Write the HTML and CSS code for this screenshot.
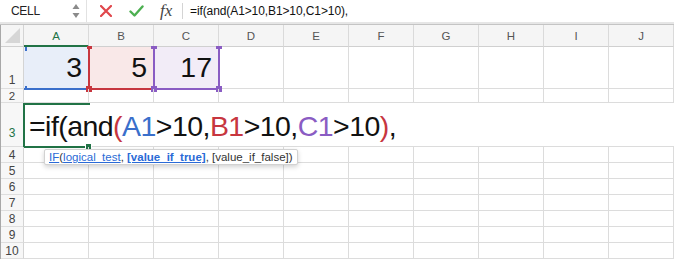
FILE: index.html
```html
<!DOCTYPE html>
<html>
<head>
<meta charset="utf-8">
<link rel="stylesheet" href="styles.css">
</head>
<body>
<div class="app">
  <div class="fbar">
    <div class="namebox">
      <span class="name">CELL</span>
      <svg class="spin" width="8" height="16" viewBox="0 0 8 16"><path d="M4 1 L7.5 6 L0.5 6 Z" fill="#8a8a8a"/><path d="M4 15 L7.5 10 L0.5 10 Z" fill="#8a8a8a"/></svg>
    </div>
    <div class="fbtns">
      <svg class="ic-x" width="12" height="12" viewBox="0 0 12 12"><path d="M1 1 L11 11 M11 1 L1 11" stroke="#e0474c" stroke-width="2.2" stroke-linecap="round"/></svg>
      <svg class="ic-ok" width="15" height="12" viewBox="0 0 15 12"><path d="M1.5 6.5 L5.5 10.5 L13.5 1.5" stroke="#4caf50" stroke-width="2.4" fill="none" stroke-linecap="round" stroke-linejoin="round"/></svg>
      <span class="fx">fx</span>
    </div>
    <div class="ftext">=if(and(A1&gt;10,B1&gt;10,C1&gt;10),</div>
  </div>
  <div class="sheet">
    <div class="row hdr">
      <div class="rh corner"><span class="tri"></span></div>
      <div class="ch active">A</div><div class="ch">B</div><div class="ch">C</div><div class="ch">D</div><div class="ch">E</div>
      <div class="ch">F</div><div class="ch">G</div><div class="ch">H</div><div class="ch">I</div><div class="ch">J</div>
    </div>
    <div class="row r1">
      <div class="rh">1</div>
      <div class="c num fa">3</div><div class="c num fb">5</div><div class="c num fc">17</div>
      <div class="c"></div><div class="c"></div><div class="c"></div><div class="c"></div><div class="c"></div><div class="c"></div><div class="c"></div>
      <div class="hl hl-a"><i class="sq tl"></i><i class="sq bl"></i></div>
      <div class="hl hl-b"><i class="sq tl"></i><i class="sq bl"></i></div>
      <div class="hl hl-c"><i class="sq tl"></i><i class="sq tr"></i><i class="sq bl"></i><i class="sq br"></i></div>
    </div>
    <div class="row r2">
      <div class="rh">2</div>
      <div class="c"></div><div class="c"></div><div class="c"></div><div class="c"></div><div class="c"></div><div class="c"></div><div class="c"></div><div class="c"></div><div class="c"></div><div class="c"></div>
    </div>
    <div class="row r3">
      <div class="rh act">3</div>
      <div class="cursorbox"><i class="handle"></i></div>
      <div class="edit"><span>=if(and</span><span class="red">(</span><span class="blue">A1</span>&gt;10,<span class="red">B1</span>&gt;10,<span class="purple">C1</span>&gt;10<span class="red">)</span>,</div>
    </div>
    <div class="row sm"><div class="rh">4</div><div class="c"></div><div class="c"></div><div class="c"></div><div class="c"></div><div class="c"></div><div class="c"></div><div class="c"></div><div class="c"></div><div class="c"></div><div class="c"></div>
      <div class="tip"><a class="lk">IF</a>(<a class="lk">logical_test</a>, <a class="lk b">[value_if_true]</a>, [value_if_false])</div>
    </div>
    <div class="row sm"><div class="rh">5</div><div class="c"></div><div class="c"></div><div class="c"></div><div class="c"></div><div class="c"></div><div class="c"></div><div class="c"></div><div class="c"></div><div class="c"></div><div class="c"></div></div>
    <div class="row sm"><div class="rh">6</div><div class="c"></div><div class="c"></div><div class="c"></div><div class="c"></div><div class="c"></div><div class="c"></div><div class="c"></div><div class="c"></div><div class="c"></div><div class="c"></div></div>
    <div class="row sm"><div class="rh">7</div><div class="c"></div><div class="c"></div><div class="c"></div><div class="c"></div><div class="c"></div><div class="c"></div><div class="c"></div><div class="c"></div><div class="c"></div><div class="c"></div></div>
    <div class="row sm"><div class="rh">8</div><div class="c"></div><div class="c"></div><div class="c"></div><div class="c"></div><div class="c"></div><div class="c"></div><div class="c"></div><div class="c"></div><div class="c"></div><div class="c"></div></div>
    <div class="row sm"><div class="rh">9</div><div class="c"></div><div class="c"></div><div class="c"></div><div class="c"></div><div class="c"></div><div class="c"></div><div class="c"></div><div class="c"></div><div class="c"></div><div class="c"></div></div>
    <div class="row sm"><div class="rh">10</div><div class="c"></div><div class="c"></div><div class="c"></div><div class="c"></div><div class="c"></div><div class="c"></div><div class="c"></div><div class="c"></div><div class="c"></div><div class="c"></div></div>
  </div>
</div>
</body>
</html>
```
FILE: styles.css
```css
* { box-sizing: border-box; }
html, body { margin: 0; padding: 0; background: #fff; }
body { width: 674px; height: 260px; overflow: hidden; font-family: "Liberation Sans", Arial, sans-serif; }
.app { width: 674px; }

.fbar { height: 25px; display: flex; align-items: center; background: #fff; border-bottom: 1px solid #c4c4c4; box-shadow: inset 0 -2px 0 #e6e6e6; padding-bottom: 3px; }
.namebox { width: 87px; height: 22px; display: flex; align-items: center; justify-content: space-between; padding: 0 6px 0 11px; border-right: 1px solid #e2e2e2; }
.name { font-size: 12px; color: #222; letter-spacing: -0.3px; }
.spin { display: block; }
.fbtns { display: flex; align-items: center; height: 16px; padding-left: 13px; width: 96px; border-right: 1px solid #d4d4d4; }
.ic-x { margin-right: 17px; }
.ic-ok { margin-right: 16px; }
.fx { font-family: "Liberation Serif", serif; font-style: italic; font-size: 17px; color: #444; line-height: 16px; }
.ftext { padding-left: 7px; font-size: 12px; color: #111; letter-spacing: -0.1px; }

.sheet { border-left: 1px solid #a8a8a8; }
.row { display: flex; position: relative; }
.rh { width: 23px; flex: none; border-right: 1px solid #d4d4d4; border-bottom: 1px solid #dedede; background: #f7f7f7; color: #444; font-size: 12px; display: flex; align-items: flex-end; justify-content: center; padding-bottom: 1px; }
.c { width: 65px; flex: none; border-right: 1px solid #dcdcdc; border-bottom: 1px solid #dcdcdc; }

.hdr { height: 22px; background: #f5f5f5; }
.hdr .rh { background: #f5f5f5; position: relative; border-bottom: 1px solid #d0d0d0; }
.tri { position: absolute; right: 3px; bottom: 3px; width: 0; height: 0; border-left: 15px solid transparent; border-bottom: 15px solid #d6d6d6; }
.ch { width: 65px; flex: none; border-right: 1px solid #dadada; border-bottom: 1px solid #d0d0d0; font-size: 11.5px; color: #555; display: flex; align-items: center; justify-content: center; padding-top: 1px; }
.ch.active { color: #217346; border-bottom: 2px solid #217346; }

.r1 { height: 42px; }
.r1 .rh { padding-bottom: 1px; }
.num { font-size: 28.5px; color: #111; text-align: right; padding-right: 6px; display: flex; align-items: flex-end; justify-content: flex-end; padding-bottom: 7px; line-height: 1; }
.fa { background: #e8eef9; }
.fb { background: #f9e8e8; }
.fc { background: #f2ecf7; }

.hl { position: absolute; top: 0; height: 43px; }
.hl-a { left: 23px; width: 66px; border-bottom: 2px solid #3a6fcb; }
.hl-b { left: 87px; width: 67px; border-left: 2px solid #c7363f; border-bottom: 2px solid #c7363f; }
.hl-c { left: 152px; width: 67px; border-left: 2px solid #8a5cc3; border-right: 2px solid #8a5cc3; border-bottom: 2px solid #8a5cc3; }
.sq { position: absolute; width: 4px; height: 4px; }
.hl-a .sq { background: #3a6fcb; width: 2px; }
.hl-a .tl { left: 1px; top: 0; }
.hl-a .bl { left: 1px; bottom: -2px; height: 4px; }
.hl-b .sq { background: #c7363f; }
.hl-b .tl { left: -3px; top: -1px; width: 5px; height: 3px; }
.hl-b .bl { left: -4px; bottom: -4px; width: 6px; height: 6px; }
.hl-c .sq { background: #8a5cc3; }
.hl-c .tl { left: -4px; top: -1px; width: 6px; height: 3px; }
.hl-c .tr { right: -4px; top: -1px; width: 6px; height: 3px; }
.hl-c .bl { left: -4px; bottom: -4px; width: 6px; height: 6px; }
.hl-c .br { right: -4px; bottom: -4px; width: 6px; height: 6px; }

.r2 { height: 14px; }
.r2 .rh { font-size: 11.5px; padding-bottom: 0; }

.r3 { height: 44px; border-bottom: 1px solid #dcdcdc; }
.r3 .rh { border-bottom: none; padding-bottom: 6px; }
.rh.act { color: #217346; }
.edit { flex: 1; font-size: 28.5px; color: #111; padding-left: 5px; display: flex; align-items: center; white-space: pre; letter-spacing: -0.55px; padding-top: 4px; position: relative; z-index: 1; }
.red { color: #c7363f; }
.blue { color: #3a6fcb; }
.purple { color: #8a5cc3; }
.cursorbox { position: absolute; left: 22px; top: 0; width: 67px; height: 45px; border: 2px solid #217346; border-right: none; }
.handle { position: absolute; right: -2px; bottom: -4px; width: 5px; height: 5px; background: #217346; border: 1px solid #fff; box-sizing: content-box; }

.sm { height: 16px; }
.sm .rh { font-size: 12px; padding-bottom: 0; }

.tip { position: absolute; left: 43px; top: 2px; height: 16px; padding: 0 4px 0 4px; background: #fff; border: 1px solid #d2d2d2; border-radius: 2px; box-shadow: 0 2px 5px rgba(0,0,0,0.18); font-size: 11.5px; color: #333; line-height: 14px; white-space: nowrap; z-index: 2; }
.lk { color: #2a6ad6; text-decoration: underline; }
.lk.b { font-weight: bold; }
```
